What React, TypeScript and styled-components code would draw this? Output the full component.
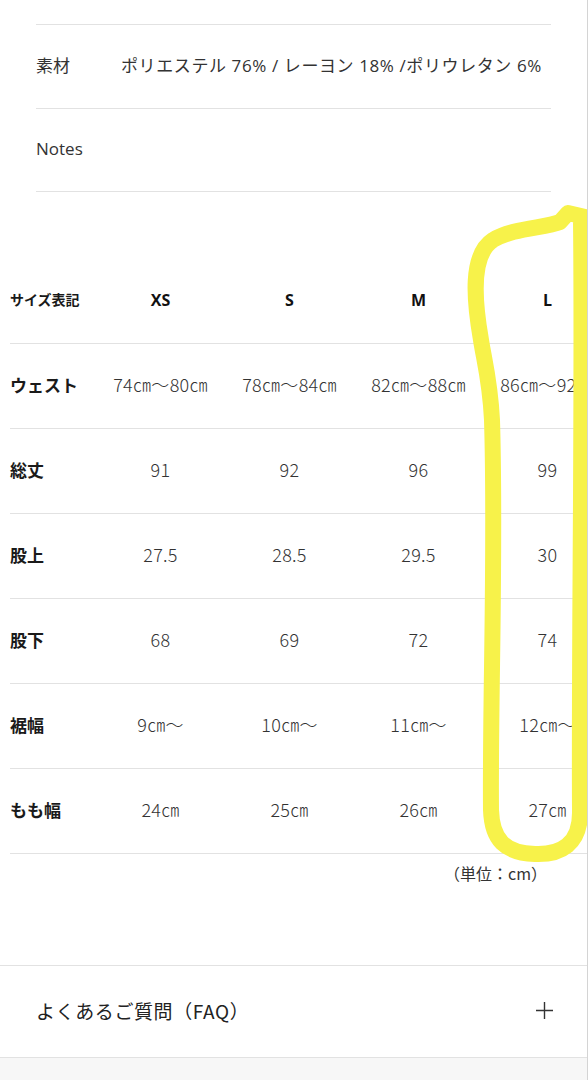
import { createGlobalStyle, styled } from "styled-components";

const GlobalStyle = createGlobalStyle`
body {
    margin: 0;
    background: #fff;
    font-family: "Noto Sans CJK JP", "Noto Sans", sans-serif;
    color: #222;
}
`

const Page = styled.div`
position: relative;
width: 588px;
height: 1080px;
box-sizing: border-box;
border-right: 1px solid #d4d4d4;
overflow: hidden;
background: #fff;
`

const Spec = styled.section`
padding: 24px 36px 0;
`

const SpecRow = styled.div`
display: flex;
align-items: center;
height: 84px;
padding-bottom: 4px;
box-sizing: border-box;
border-top: 1px solid #e2e2e2;

&:last-child {
    border-bottom: 1px solid #e2e2e2;
}
`

const SpecLabel = styled.div`
width: 85px;
font-size: 17px;
color: #333;
font-family: "Open Sans", "Noto Sans CJK JP", sans-serif;
`

const SpecValue = styled.div`
font-size: 17px;
letter-spacing: 0.6px;
color: #333;
white-space: nowrap;
font-family: "Open Sans", "Noto Sans CJK JP", sans-serif;
`

const TableWrap = styled.div`
margin-top: 67px;
padding-left: 10px;
overflow: hidden;
`

const SizeRow = styled.div`
display: grid;
grid-template-columns: 86px repeat(4, 129px);
width: 602px;
height: 84px;
align-items: center;
border-bottom: 1px solid #e2e2e2;
`

const RowLabel = styled.div<{ $small?: boolean }>`
font-weight: 700;
font-size: ${props => props.$small ? '14px' : '17px'};
color: #1a1a1a;
white-space: nowrap;
padding-bottom: 4px;
`

const HeadCell = styled.div`
text-align: center;
font-family: "Open Sans", sans-serif;
font-weight: 700;
font-size: 16px;
color: #111;
padding-bottom: 3px;
`

const Cell = styled.div`
text-align: center;
font-size: 18px;
letter-spacing: 0.3px;
font-weight: 300;
color: #333;
white-space: nowrap;
padding-bottom: 4px;
`

const Unit = styled.div`
text-align: right;
padding: 7px 40px 0 0;
font-size: 16px;
color: #333;
`

const Faq = styled.div`
margin-top: 80px;
display: flex;
align-items: center;
justify-content: space-between;
height: 93px;
padding: 0 34px 2px 36px;
box-sizing: border-box;
border-top: 1px solid #e2e2e2;
border-bottom: 1px solid #e2e2e2;
font-size: 19px;
letter-spacing: 0.6px;
color: #222;
`

const Bottom = styled.div`
height: 40px;
background: #f7f7f7;
`

const Marker = styled.svg`
position: absolute;
left: 0;
top: 0;
pointer-events: none;
`

const sizes = ['XS', 'S', 'M', 'L'];

const rows: { label: string; values: string[] }[] = [
    { label: 'ウェスト', values: ['74㎝〜80㎝', '78㎝〜84㎝', '82㎝〜88㎝', '86㎝〜92㎝'] },
    { label: '総丈', values: ['91', '92', '96', '99'] },
    { label: '股上', values: ['27.5', '28.5', '29.5', '30'] },
    { label: '股下', values: ['68', '69', '72', '74'] },
    { label: '裾幅', values: ['9㎝〜', '10㎝〜', '11㎝〜', '12㎝〜'] },
    { label: 'もも幅', values: ['24㎝', '25㎝', '26㎝', '27㎝'] },
];

const App = () => {
    return (
        <Page>
            <GlobalStyle />
            <Spec>
                <SpecRow>
                    <SpecLabel>素材</SpecLabel>
                    <SpecValue>ポリエステル 76% / レーヨン 18% /ポリウレタン 6%</SpecValue>
                </SpecRow>
                <SpecRow>
                    <SpecLabel>Notes</SpecLabel>
                </SpecRow>
            </Spec>

            <TableWrap>
                <SizeRow>
                    <RowLabel $small>サイズ表記</RowLabel>
                    {sizes.map(size => <HeadCell key={size}>{size}</HeadCell>)}
                </SizeRow>
                {rows.map(row => (
                    <SizeRow key={row.label}>
                        <RowLabel>{row.label}</RowLabel>
                        {row.values.map((v, i) => <Cell key={i}>{v}</Cell>)}
                    </SizeRow>
                ))}
            </TableWrap>
            <Unit>（単位：cm）</Unit>

            <Faq>
                <span>よくあるご質問（FAQ）</span>
                <svg width="17" height="17" viewBox="0 0 17 17">
                    <path d="M8.5 0 V17 M0 8.5 H17" stroke="#333" strokeWidth="1.4" fill="none" />
                </svg>
            </Faq>
            <Bottom />

            {/* hand-drawn highlight around the L column */}
            <Marker width="588" height="1080" viewBox="0 0 588 1080">
                <path
                    d="M481 340 C474 300 470 255 493 240 C513 228 545 228 560 222 L568 213 L594 219
                       M581 222 C583 400 579 650 580 810 C581 845 560 855 535 854
                       C505 853 492 840 491 810 C490 700 496 550 492 420 C490 380 484 360 481 340"
                    stroke="#f7f24a"
                    strokeWidth="16"
                    strokeLinecap="round"
                    strokeLinejoin="round"
                    fill="none" />
            </Marker>
        </Page>
    );
};

export default App;
